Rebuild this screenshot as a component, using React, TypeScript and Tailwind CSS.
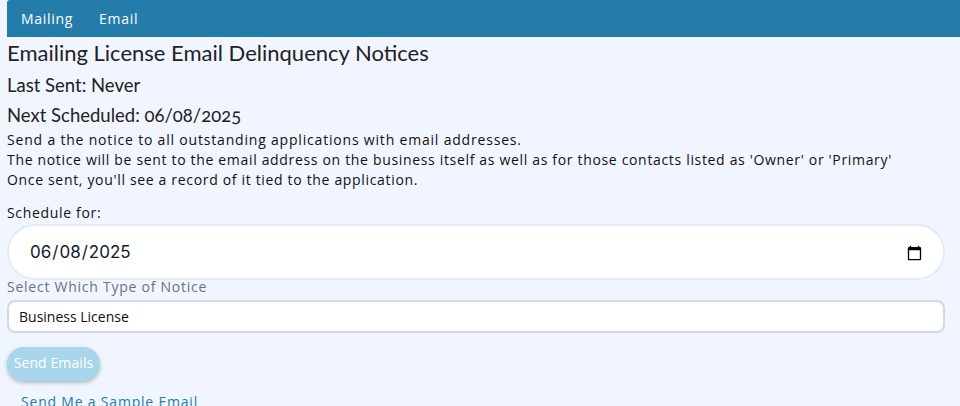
export default function App() {
  const body = { fontFamily: '"Open Sans", "Liberation Sans", sans-serif' };
  const head = { fontFamily: 'Lato, "Noto Sans", sans-serif' };
  return (
    <div className="h-[406px] w-[960px] overflow-hidden bg-[#f1f5ff] pl-[7px] text-black" style={body}>
      <nav className="flex h-[37px] items-center gap-[26px] rounded-tl-[3px] bg-[#247cab] pl-[14px] text-[14px] tracking-[0.7px] text-white">
        <a>Mailing</a>
        <a>Email</a>
      </nav>
      <div className="w-[938px]">
        <h1 className="mt-[3px] h-[26px] text-[22px] font-normal leading-[26px] text-[#222]" style={head}>Emailing License Email Delinquency Notices</h1>
        <h2 className="mt-[7px] h-[24px] text-[18.5px] font-normal leading-[24px] text-[#222]" style={head}>Last Sent: Never</h2>
        <h2 className="mt-[6px] h-[24px] text-[18.5px] font-normal leading-[24px] text-[#222] [font-feature-settings:'onum']" style={head}>Next Scheduled: 06/08/2025</h2>
        <p className="mt-[3px] text-[14px] leading-[20px] tracking-[0.67px] text-[#111]">
          <span className="tracking-[0.81px]">Send a the notice to all outstanding applications with email addresses.</span><br />
          The notice will be sent to the email address on the business itself as well as for those contacts listed as 'Owner' or 'Primary'<br />
          Once sent, you'll see a record of it tied to the application.
        </p>
        <label className="mt-[13px] block text-[14px] leading-[20px] tracking-[0.67px] text-[#111]">Schedule for:</label>
        <input
          type="date"
          defaultValue="2025-06-08"
          className="mt-[1px] block h-[56px] w-full rounded-[28px] border-2 border-[#e3ebf8] bg-white pb-0 pl-[20px] pr-[18px] pt-[2px] text-[17px] text-[#101a2e] outline-none"
          style={{ fontFamily: 'Inter, sans-serif' }}
        />
        <label className="mt-[-3px] block text-[14px] leading-[20px] tracking-[0.75px] text-[#6b7280]">Select Which Type of Notice</label>
        <div className="mt-[3px] flex h-[33px] items-center rounded-[8px] border-2 border-[#d4d8e0] bg-white pl-[10px] text-[14px] text-[#111]">Business License</div>
        <button className="mt-[14px] block h-[34px] w-[93px] rounded-[17px] bg-[#a8d6ec] pb-[3px] text-[14px] tracking-[0.1px] text-white shadow-[0_2px_4px_rgba(0,0,0,0.25)]">Send Emails</button>
        <a className="mt-[11px] block pl-[14px] text-[14px] leading-[20px] tracking-[0.8px] text-[#247cab]">Send Me a Sample Email</a>
      </div>
    </div>
  );
}
